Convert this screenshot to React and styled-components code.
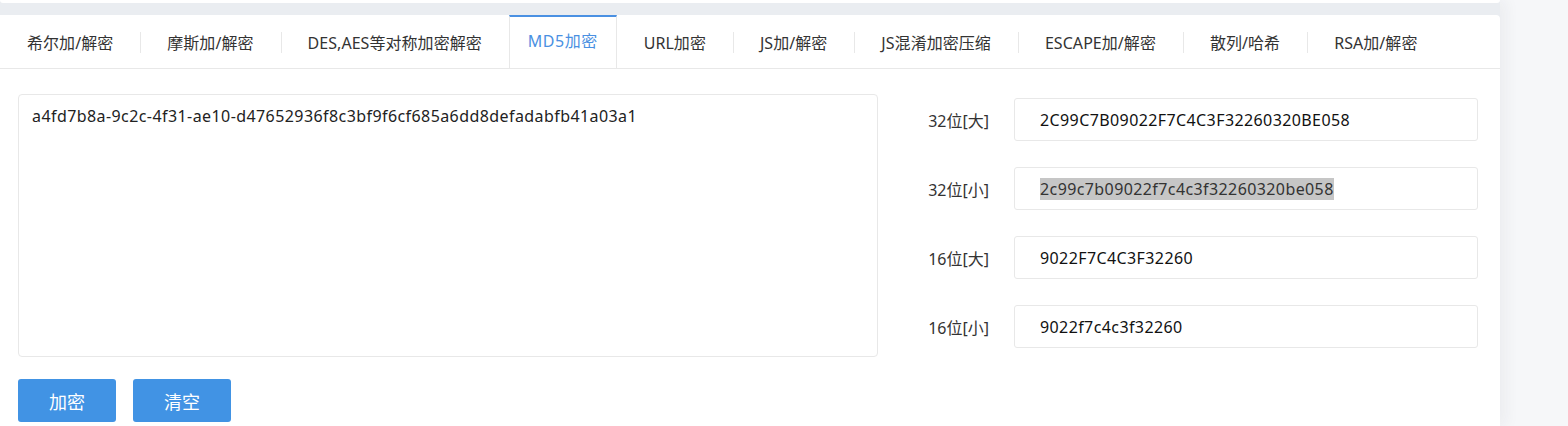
import React, { useState } from "react";
import styled, { createGlobalStyle } from "styled-components";

const GlobalStyle = createGlobalStyle`
  body {
    margin: 0;
    background: #f6f7f9;
    font-family: "Noto Sans", "Noto Sans CJK SC", sans-serif;
  }
  * { box-sizing: border-box; }
`;

const Column = styled.div`
  width: 1500px;
  background: #eaedf1;
  box-shadow: 6px 0 14px rgba(30, 40, 60, 0.05);
`;

const TopCard = styled.div`
  height: 3px;
  background: #fff;
  border-radius: 0 0 4px 4px;
  margin-bottom: 12px;
`;

const Card = styled.div`
  background: #fff;
  border-radius: 0 4px 0 0;
  height: 411px;
`;

const TabBar = styled.div`
  display: flex;
  height: 54px;
  border-bottom: 1px solid #e8e8e8;
`;

const Tab = styled.div`
  position: relative;
  display: flex;
  align-items: center;
  padding: ${(p) => (p.$active ? "0 18px 6px" : "0 26px 1px")};
  font-size: 16px;
  color: ${(p) => (p.$active ? "#4a90e2" : "#333")};
  letter-spacing: ${(p) => (p.$active ? "0.5px" : "0.05px")};
  border-top: 2px solid ${(p) => (p.$active ? "#4a90e2" : "transparent")};
  border-left: 1px solid ${(p) => (p.$active ? "#e8e8e8" : "transparent")};
  border-right: 1px solid ${(p) => (p.$active ? "#e8e8e8" : "transparent")};
  white-space: nowrap;
  cursor: pointer;

  &::before {
    content: "";
    display: ${(p) => (p.$sep ? "block" : "none")};
    position: absolute;
    left: -1px;
    top: 15px;
    height: 21px;
    width: 1px;
    background: #e8e8e8;
  }
`;

const Body = styled.div`
  display: flex;
  padding: 25px 22px 0 18px;
`;

const LeftPane = styled.div`
  width: 860px;
  display: flex;
  flex-direction: column;
`;

const Source = styled.div`
  height: 263px;
  border: 1px solid #e8e8e8;
  border-radius: 4px;
  padding: 10px 13px;
  font-size: 16px;
  letter-spacing: 0.42px;
  color: #222;
`;

const Buttons = styled.div`
  display: flex;
  gap: 17px;
  margin-top: 22px;
`;

const Button = styled.button`
  width: 98px;
  height: 43px;
  border: none;
  border-radius: 3px;
  background: #4193e4;
  color: #fff;
  font-family: inherit;
  font-size: 18px;
  cursor: pointer;
`;

const RightPane = styled.div`
  flex: 1;
  display: flex;
  flex-direction: column;
  gap: 26px;
  padding-top: 4px;
`;

const Row = styled.div`
  display: grid;
  grid-template-columns: 1fr 464px;
  column-gap: 25px;
  align-items: center;
`;

const Label = styled.div`
  text-align: right;
  font-size: 16px;
  color: #333;
`;

const Output = styled.div`
  height: 43px;
  display: flex;
  align-items: center;
  border: 1px solid #e8e8e8;
  border-radius: 3px;
  padding-left: 25px;
  font-size: 16px;
  letter-spacing: 0.4px;
  color: #111;
`;

const Selected = styled.span`
  background: #c6c6c6;
  color: #333;
`;

const tabs = [
  "希尔加/解密",
  "摩斯加/解密",
  "DES,AES等对称加密解密",
  "MD5加密",
  "URL加密",
  "JS加/解密",
  "JS混淆加密压缩",
  "ESCAPE加/解密",
  "散列/哈希",
  "RSA加/解密",
];

const results = [
  { label: "32位[大]", value: "2C99C7B09022F7C4C3F32260320BE058" },
  { label: "32位[小]", value: "2c99c7b09022f7c4c3f32260320be058", selected: true },
  { label: "16位[大]", value: "9022F7C4C3F32260" },
  { label: "16位[小]", value: "9022f7c4c3f32260" },
];

const App = () => {
  const [active, setActive] = useState(3);

  return (
    <>
      <GlobalStyle />
      <Column>
        <TopCard />
        <Card>
          <TabBar>
            {tabs.map((t, i) => (
              <Tab
                key={t}
                $active={i === active}
                $sep={i > 0 && i !== active && i - 1 !== active}
                onClick={() => setActive(i)}
              >
                {t}
              </Tab>
            ))}
          </TabBar>
          <Body>
            <LeftPane>
              <Source>a4fd7b8a-9c2c-4f31-ae10-d47652936f8c3bf9f6cf685a6dd8defadabfb41a03a1</Source>
              <Buttons>
                <Button>加密</Button>
                <Button>清空</Button>
              </Buttons>
            </LeftPane>
            <RightPane>
              {results.map((r) => (
                <Row key={r.label}>
                  <Label>{r.label}</Label>
                  <Output>
                    {r.selected ? <Selected>{r.value}</Selected> : r.value}
                  </Output>
                </Row>
              ))}
            </RightPane>
          </Body>
        </Card>
      </Column>
    </>
  );
};

export default App;
